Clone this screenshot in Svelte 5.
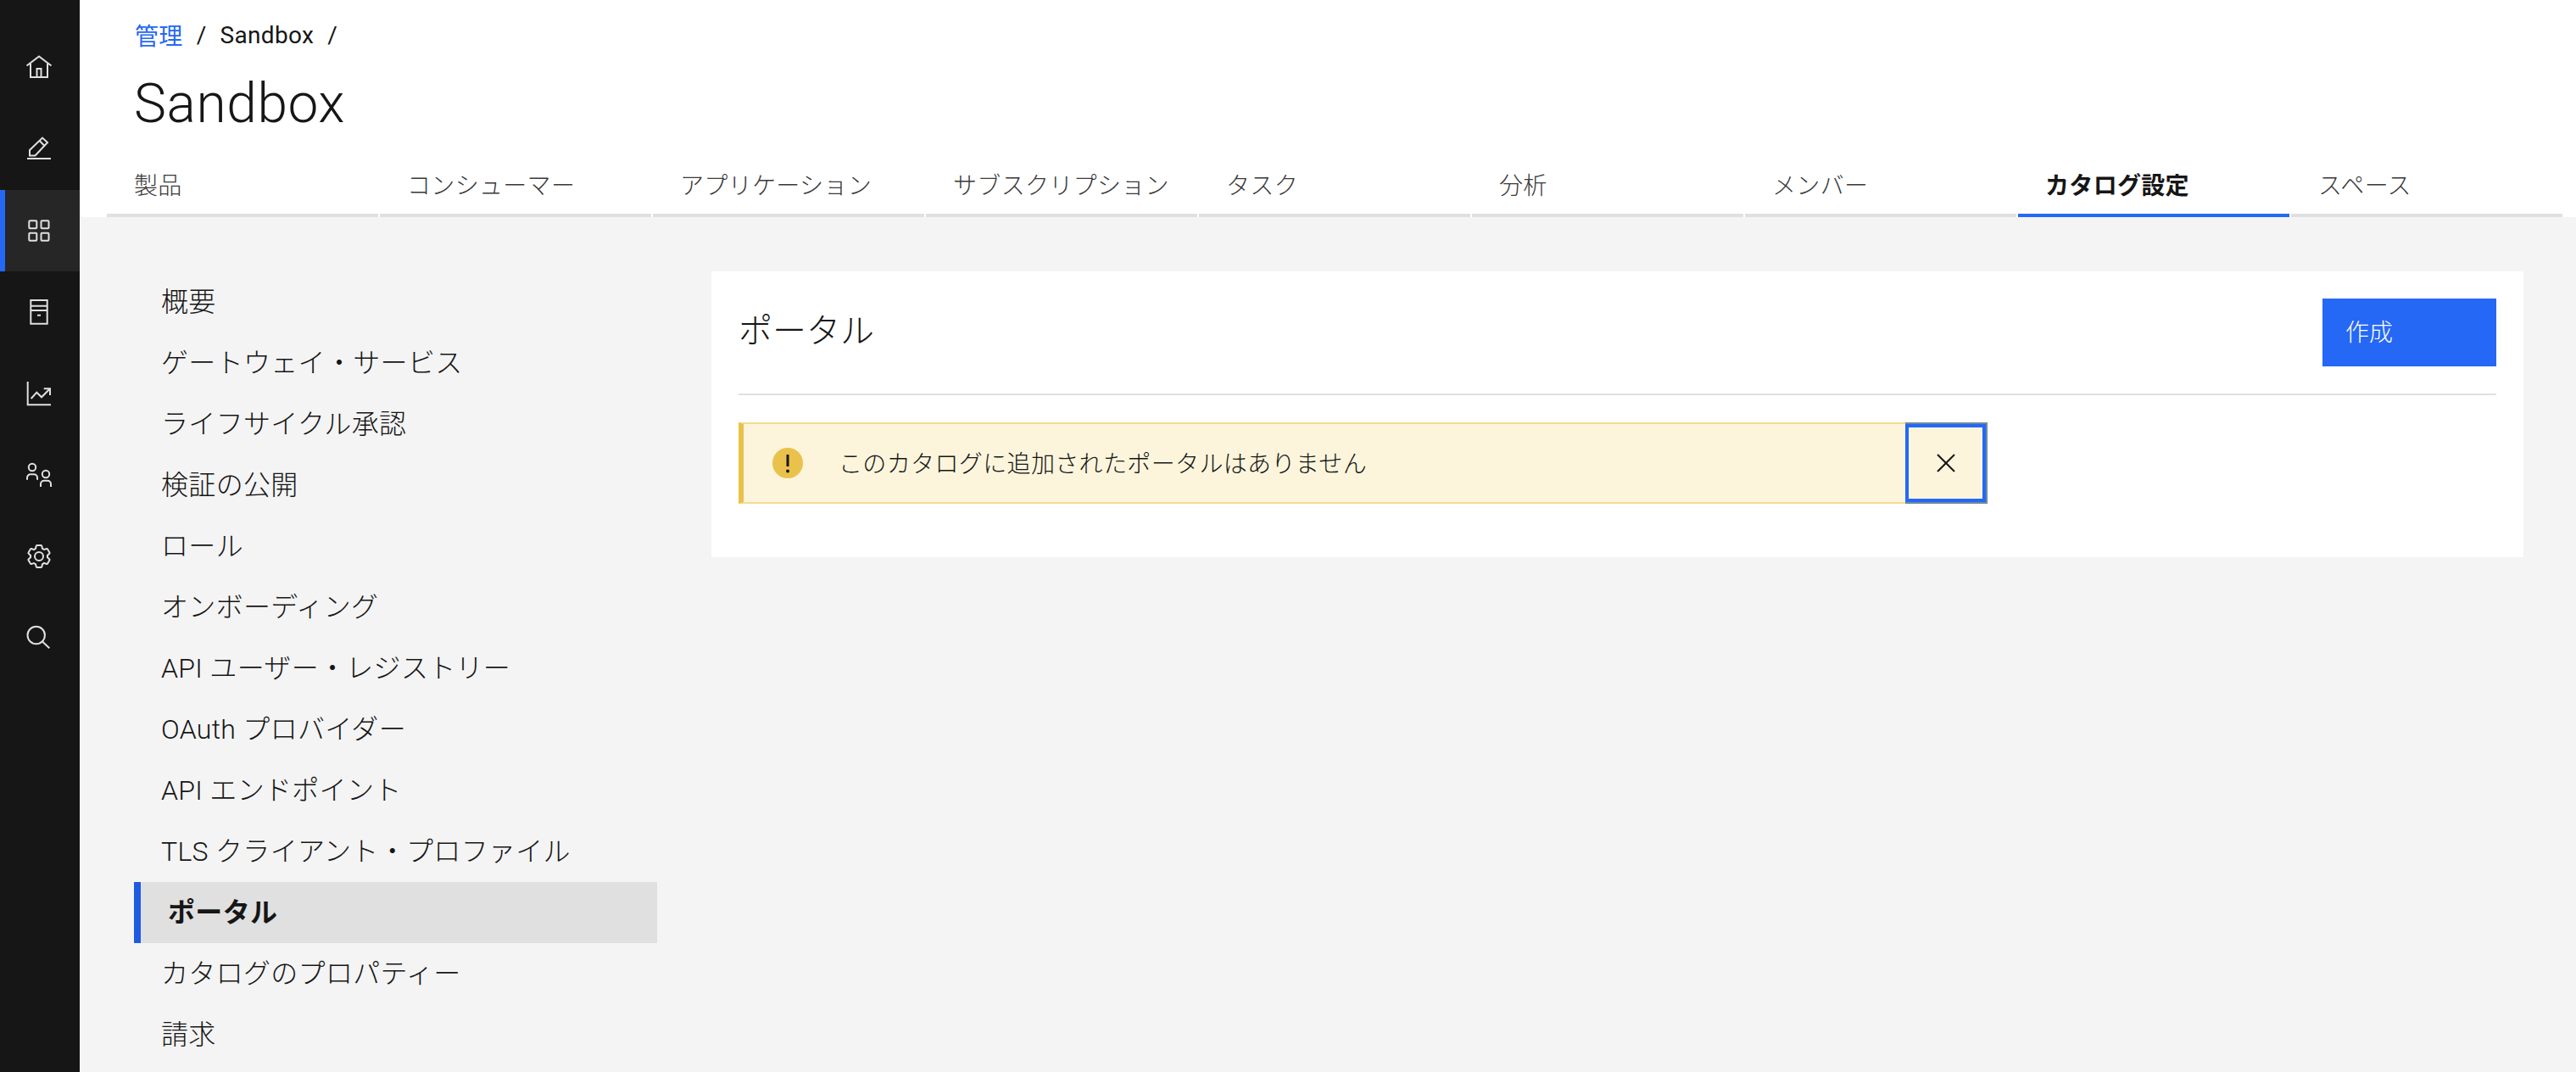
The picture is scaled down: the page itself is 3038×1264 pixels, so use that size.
<script lang="ts">
  // catalog settings page: rail, header tabs, side nav and portal card
  const tabs = ['製品', 'コンシューマー', 'アプリケーション', 'サブスクリプション', 'タスク', '分析', 'メンバー', 'カタログ設定', 'スペース'];
  const activeTab = 'カタログ設定';
  const navItems = ['概要', 'ゲートウェイ・サービス', 'ライフサイクル承認', '検証の公開', 'ロール', 'オンボーディング', 'API ユーザー・レジストリー', 'OAuth プロバイダー', 'API エンドポイント', 'TLS クライアント・プロファイル', 'ポータル', 'カタログのプロパティー', '請求'];
  const activeNav = 'ポータル';
  const rail = ['home', 'edit', 'grid', 'book', 'chart', 'users', 'gear', 'search'];
</script>

<div class="app">
  <aside class="rail">
    {#each rail as icon}
      <div class="rail-item" class:active={icon === 'grid'}>
        <svg class="ico" width="32" height="32" viewBox="0 0 32 32">
          {#if icon === 'home'}
            <path d="M1.5 13.5 16 2.500l14.5 11M6 11v16h20V11M13.500 27V17h5v10" />
          {:else if icon === 'edit'}
            <path d="M5 23.500v-6.500L20 2.500l6 5.500-14.500 15.500zM16.700 6l5.600 5.700M2 27h28" />
          {:else if icon === 'grid'}
            <rect x="4.3" y="4.3" width="9" height="9" rx="1" />
            <rect x="18.5" y="4.3" width="9" height="9" rx="1" />
            <rect x="4.3" y="18.7" width="9" height="9" rx="1" />
            <rect x="18.5" y="18.7" width="9" height="9" rx="1" />
          {:else if icon === 'book'}
            <path d="M6.300 2h19.400v27.700H6.300zM6.300 8.700h19.400M6.300 14h19.400M14 19.700h4" />
          {:else if icon === 'chart'}
            <path d="M2.700 2v27.300H30M6.700 22l6.600-7.300 5.700 5.600 10-10M21.700 10.300H29V18" />
          {:else if icon === 'users'}
            <circle cx="8" cy="7" r="4.2" />
            <circle cx="24" cy="15" r="4.2" />
            <path d="M2 21.700v-2.400a4 4 0 0 1 4-4h4a4 4 0 0 1 4 4v2.400M18 30v-3.300a4 4 0 0 1 4-4h4a4 4 0 0 1 4 4V30" />
          {:else if icon === 'gear'}
            <path class="solid" d="M27,16.76c0-.25,0-.5,0-.76s0-.51,0-.77l1.92-1.68A2,2,0,0,0,29.3,11L26.94,7a2,2,0,0,0-1.73-1,2,2,0,0,0-.64.1l-2.43.82a11.35,11.35,0,0,0-1.31-.75l-.51-2.52a2,2,0,0,0-2-1.61H13.64a2,2,0,0,0-2,1.61l-.51,2.52a11.48,11.48,0,0,0-1.32.75L7.43,6.06A2,2,0,0,0,6.79,6,2,2,0,0,0,5.06,7L2.7,11a2,2,0,0,0,.41,2.51L5,15.24c0,.25,0,.5,0,.76s0,.51,0,.77L3.11,18.45A2,2,0,0,0,2.7,21L5.06,25a2,2,0,0,0,1.73,1,2,2,0,0,0,.64-.1l2.43-.82a11.35,11.35,0,0,0,1.31.75l.51,2.52a2,2,0,0,0,2,1.61h4.72a2,2,0,0,0,2-1.61l.51-2.52a11.48,11.48,0,0,0,1.32-.75l2.38.8a2,2,0,0,0,.64.1,2,2,0,0,0,1.73-1L29.3,21a2,2,0,0,0-.41-2.51ZM25.21,24l-3.43-1.16a8.86,8.86,0,0,1-2.71,1.57L18.36,28H13.64l-.71-3.55a9.36,9.36,0,0,1-2.7-1.57L6.79,24,4.43,20l2.72-2.4a8.9,8.9,0,0,1,0-3.13L4.43,12,6.79,8l3.43,1.16a8.86,8.86,0,0,1,2.71-1.57L13.64,4h4.72l.71,3.55a9.36,9.36,0,0,1,2.7,1.57L25.21,8,27.57,12l-2.72,2.4a8.9,8.9,0,0,1,0,3.13L27.57,20Z" />
            <circle cx="16" cy="16" r="5" />
          {:else if icon === 'search'}
            <circle cx="12.700" cy="13" r="10.200" />
            <path d="M20 20.500l8.300 7.800" />
          {/if}
        </svg>
      </div>
    {/each}
  </aside>

  <div class="page">
    <header class="head">
      <nav class="crumbs">
        <span class="link">管理</span><span class="sep">/</span><span>Sandbox</span><span class="sep">/</span>
      </nav>
      <h1>Sandbox</h1>
      <div class="tabs">
        {#each tabs as tab}
          <div class="tab" class:on={tab === activeTab}>{tab}</div>
        {/each}
      </div>
    </header>

    <main class="body">
      <ul class="side">
        {#each navItems as item}
          <li class:on={item === activeNav}>{item}</li>
        {/each}
      </ul>

      <section class="card">
        <div class="card-head">
          <h2>ポータル</h2>
          <button class="create">作成</button>
        </div>
        <div class="alert">
          <svg class="warn" width="36" height="36" viewBox="0 0 36 36">
            <circle cx="18" cy="18" r="18" fill="#eac14a" />
            <rect x="16.500" y="8" width="3" height="14" fill="#161616" />
            <circle cx="18" cy="27.500" r="2" fill="#161616" />
          </svg>
          <p>このカタログに追加されたポータルはありません</p>
          <button class="close" aria-label="閉じる">
            <svg width="24" height="24" viewBox="0 0 24 24"><path d="M2 2l20 20M22 2 2 22" /></svg>
          </button>
        </div>
      </section>
    </main>
  </div>
</div>

<style>
  :global(body) { margin: 0; background: #f4f4f4; }
  .app {
    display: flex;
    height: 1264px;
    overflow: hidden;
    font-family: Roboto, "Noto Sans CJK JP", sans-serif;
    font-size: 28px;
    color: #161616;
  }

  .rail { flex: 0 0 94px; background: #161616; padding-top: 32px; box-sizing: border-box; }
  .rail-item { height: 96px; display: flex; align-items: center; justify-content: center; padding-right: 2px; box-sizing: border-box; }
  .rail-item.active { background: #262626; box-shadow: inset 6px 0 0 #2568f5; }
  .ico { fill: none; stroke: #e0e0e0; stroke-width: 2; }
  .ico .solid { fill: #e0e0e0; stroke: none; }

  .page { flex: 1; min-width: 0; display: flex; flex-direction: column; }
  .head { background: #fff; height: 256px; box-sizing: border-box; }
  .crumbs { display: flex; align-items: center; height: 40px; padding: 21px 0 0 65px; letter-spacing: 0.32px; }
  .crumbs .link { color: #2568f5; }
  .sep { margin: 0 16px; }
  h1 { margin: 0; padding: 22px 0 0 64px; height: 80px; font-size: 64px; font-weight: 300; line-height: 80px; letter-spacing: 0.6px; }
  .tabs { display: flex; gap: 2px; margin: 29px 0 0 32px; }
  .tab {
    flex: 0 0 320px;
    box-sizing: border-box;
    height: 64px;
    padding: 8px 0 0 32px;
    line-height: 40px;
    color: #393939;
    border-bottom: 4px solid #e0e0e0;
    font-weight: 300;
    letter-spacing: 0.32px;
    white-space: nowrap;
  }
  .tab.on { font-weight: 700; color: #161616; border-bottom-color: #2568f5; }

  .body { flex: 1; display: flex; gap: 64px; align-items: flex-start; padding: 64px 62px 0 64px; }
  .side { flex: 0 0 617px; margin: 0; padding: 0; list-style: none; font-size: 32px; letter-spacing: 0.32px; }
  .side li { height: 72px; line-height: 72px; padding-left: 32px; white-space: nowrap; font-weight: 300; }
  .side li.on { background: #e0e0e0; box-shadow: inset 8px 0 0 #1d5be0; padding-left: 40px; font-weight: 700; }

  .card { flex: 1; background: #fff; padding: 32px 32px 31px; box-sizing: border-box; }
  .card-head { display: flex; justify-content: space-between; align-items: flex-start; padding-bottom: 32px; border-bottom: 2px solid #e0e0e0; }
  h2 { margin: 0; font-size: 40px; font-weight: 300; line-height: 78px; }
  button { font-family: inherit; border: none; cursor: pointer; padding: 0; }
  .create {
    width: 205px;
    height: 80px;
    background: #2568f5;
    color: #fff;
    font-size: 28px;
    font-weight: 300;
    text-align: left;
    padding: 0 0 4px 27px;
  }

  .alert {
    display: flex;
    align-items: center;
    width: 1473px;
    height: 96px;
    margin: 32px 0;
    box-sizing: border-box;
    background: #fcf5dc;
    border: solid #f5dc8f;
    border-width: 2px 0;
    border-left: 6px solid #eac14a;
    padding-left: 34px;
  }
  .warn { flex: none; }
  .alert p { flex: 1; margin: 0 0 3px 42px; font-weight: 300; letter-spacing: 0.36px; }
  .close {
    flex: none;
    display: flex;
    align-items: center;
    justify-content: center;
    width: 97px;
    height: 96px;
    margin: -2px 0;
    box-sizing: border-box;
    background: #fcf5dc;
    border: solid #6f8aa0;
    border-width: 2px 2px 2px 0;
    box-shadow: inset 0 0 0 4px #2568f5;
  }
  .close path { fill: none; stroke: #161616; stroke-width: 2; }
</style>
